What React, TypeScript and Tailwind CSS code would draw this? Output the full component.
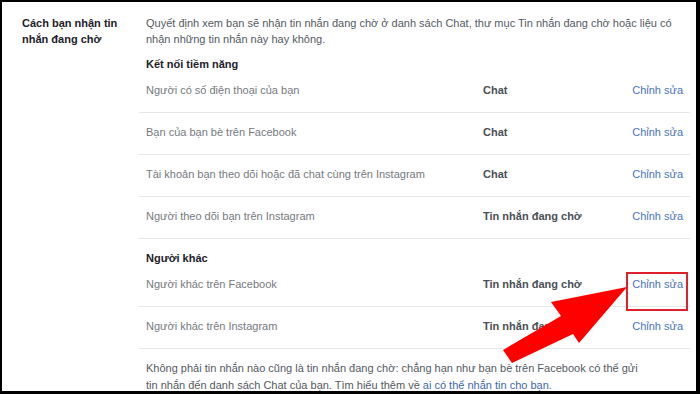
import React from "react";

type Row = { label: string; value: string; boxed?: boolean };

const group1: Row[] = [
  { label: "Người có số điện thoại của bạn", value: "Chat" },
  { label: "Bạn của bạn bè trên Facebook", value: "Chat" },
  { label: "Tài khoản bạn theo dõi hoặc đã chat cùng trên Instagram", value: "Chat" },
  { label: "Người theo dõi bạn trên Instagram", value: "Tin nhắn đang chờ" },
];

const group2: Row[] = [
  { label: "Người khác trên Facebook", value: "Tin nhắn đang chờ", boxed: true },
  { label: "Người khác trên Instagram", value: "Tin nhắn đang chờ" },
];

function SettingRow({ row }: { row: Row }) {
  return (
    <div className="grid h-[42px] grid-cols-[337px_1fr_auto] border-b border-[#e6e7ea] px-[7px] pt-[11px] leading-4">
      <div className="text-[#767a80]">{row.label}</div>
      <div className="font-bold text-[#4b4f56]">{row.value}</div>
      <div className="relative text-[#4a74c6]">
        Chỉnh sửa
        {row.boxed && (
          <span className="absolute -left-[6px] -right-[5px] -top-[4px] -bottom-[5px] border-2 border-[#e2202c]" />
        )}
      </div>
    </div>
  );
}

export default function App() {
  return (
    <div className="relative h-[394px] w-[700px] overflow-hidden border-b-[3px] border-l-2 border-r-4 border-t-2 border-black bg-white font-['Liberation_Sans',Arial,sans-serif] text-[11px]">
      <div className="flex pt-[13px]">
        <div className="w-[137px] shrink-0 pl-5 font-bold leading-4 text-[#1d2129]">
          Cách bạn nhận tin
          <br />
          nhắn đang chờ
        </div>
        <div className="w-[551px] shrink-0">
          <div className="px-[7px] leading-4 text-[#555a62]">
            Quyết định xem bạn sẽ nhận tin nhắn đang chờ ở danh sách Chat, thư mục Tin nhắn đang chờ hoặc liệu có
            <br />
            nhận những tin nhắn này hay không.
          </div>
          <div className="mt-[10px] px-[7px] font-bold leading-[14px] text-[#1d2129]">Kết nối tiềm năng</div>
          {group1.map((r) => (
            <SettingRow key={r.label} row={r} />
          ))}
          <div className="mt-[12px] px-[7px] font-bold leading-[14px] text-[#1d2129]">Người khác</div>
          {group2.map((r) => (
            <SettingRow key={r.label} row={r} />
          ))}
          <div className="mt-[11px] px-[7px] leading-[17px] text-[#555a62]">
            Không phải tin nhắn nào cũng là tin nhắn đang chờ: chẳng hạn như bạn bè trên Facebook có thể gửi
            <br />
            tin nhắn đến danh sách Chat của bạn. Tìm hiểu thêm về{" "}
            <span className="text-[#4267b2]">ai có thể nhắn tin cho bạn.</span>
          </div>
        </div>
      </div>
      <svg
        className="pointer-events-none absolute left-[-2px] top-[-2px]"
        width="700"
        height="394"
        viewBox="0 0 700 394"
      >
        <polygon
          points="627,287 551,302 561,316 503,350 512,363 573,334 579,343"
          fill="#fe0000"
        />
      </svg>
    </div>
  );
}
